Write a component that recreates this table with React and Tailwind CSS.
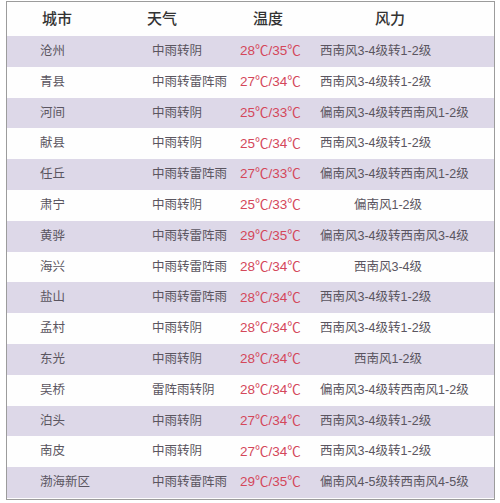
import React from 'react';

const rows = [
  ['沧州', '中雨转阴', '28℃/35℃', '西南风3-4级转1-2级', false],
  ['青县', '中雨转雷阵雨', '27℃/34℃', '西南风3-4级转1-2级', false],
  ['河间', '中雨转阴', '25℃/33℃', '偏南风3-4级转西南风1-2级', false],
  ['献县', '中雨转阴', '25℃/34℃', '西南风3-4级转1-2级', false],
  ['任丘', '中雨转雷阵雨', '27℃/33℃', '偏南风3-4级转西南风1-2级', false],
  ['肃宁', '中雨转阴', '25℃/33℃', '偏南风1-2级', true],
  ['黄骅', '中雨转雷阵雨', '29℃/35℃', '偏南风3-4级转西南风3-4级', false],
  ['海兴', '中雨转雷阵雨', '28℃/34℃', '西南风3-4级', true],
  ['盐山', '中雨转雷阵雨', '28℃/34℃', '西南风3-4级转1-2级', false],
  ['孟村', '中雨转阴', '28℃/34℃', '西南风3-4级转1-2级', false],
  ['东光', '中雨转阴', '28℃/34℃', '西南风1-2级', true],
  ['吴桥', '雷阵雨转阴', '28℃/34℃', '偏南风3-4级转西南风1-2级', false],
  ['泊头', '中雨转阴', '27℃/34℃', '西南风3-4级转1-2级', false],
  ['南皮', '中雨转阴', '27℃/34℃', '西南风3-4级转1-2级', false],
  ['渤海新区', '中雨转雷阵雨', '29℃/35℃', '偏南风4-5级转西南风4-5级', false],
];

const font = { fontFamily: '"Liberation Sans", "Noto Sans CJK SC", sans-serif' };

export default function App() {
  return (
    <div className="w-[500px] h-[503px] bg-white pt-px pl-[6px]" style={font}>
      <div className="w-[489px] h-[499px] border border-[#9c9c9c] bg-[#fefefe] overflow-hidden">
        {/* Header */}
        <div className="grid grid-cols-[140px_90px_80px_1fr] h-[34px] items-center text-[15px] text-[#333] font-medium">
          <div className="pl-[35px]">城市</div>
          <div>天气</div>
          <div className="pl-[16px]">温度</div>
          <div className="pl-[58px]">风力</div>
        </div>

        {rows.map(([city, weather, temp, wind, center], i) => (
          <div
            key={city}
            className={`grid grid-cols-[140px_90px_80px_1fr] h-[30.8px] items-center text-[12.5px] text-[#5a5560] ${
              i % 2 === 0 ? 'bg-[#ddd8e8]' : 'bg-[#fefefe]'
            }`}
          >
            <div className="pl-[33px]">{city}</div>
            <div className="pl-[5px]">{weather}</div>
            <div className="pl-[3px] text-[13.5px] text-[#d4475a]">{temp}</div>
            <div className={center ? 'pl-[3px] pr-[38px] text-center' : 'pl-[3px]'}>{wind}</div>
          </div>
        ))}
      </div>
    </div>
  );
}
